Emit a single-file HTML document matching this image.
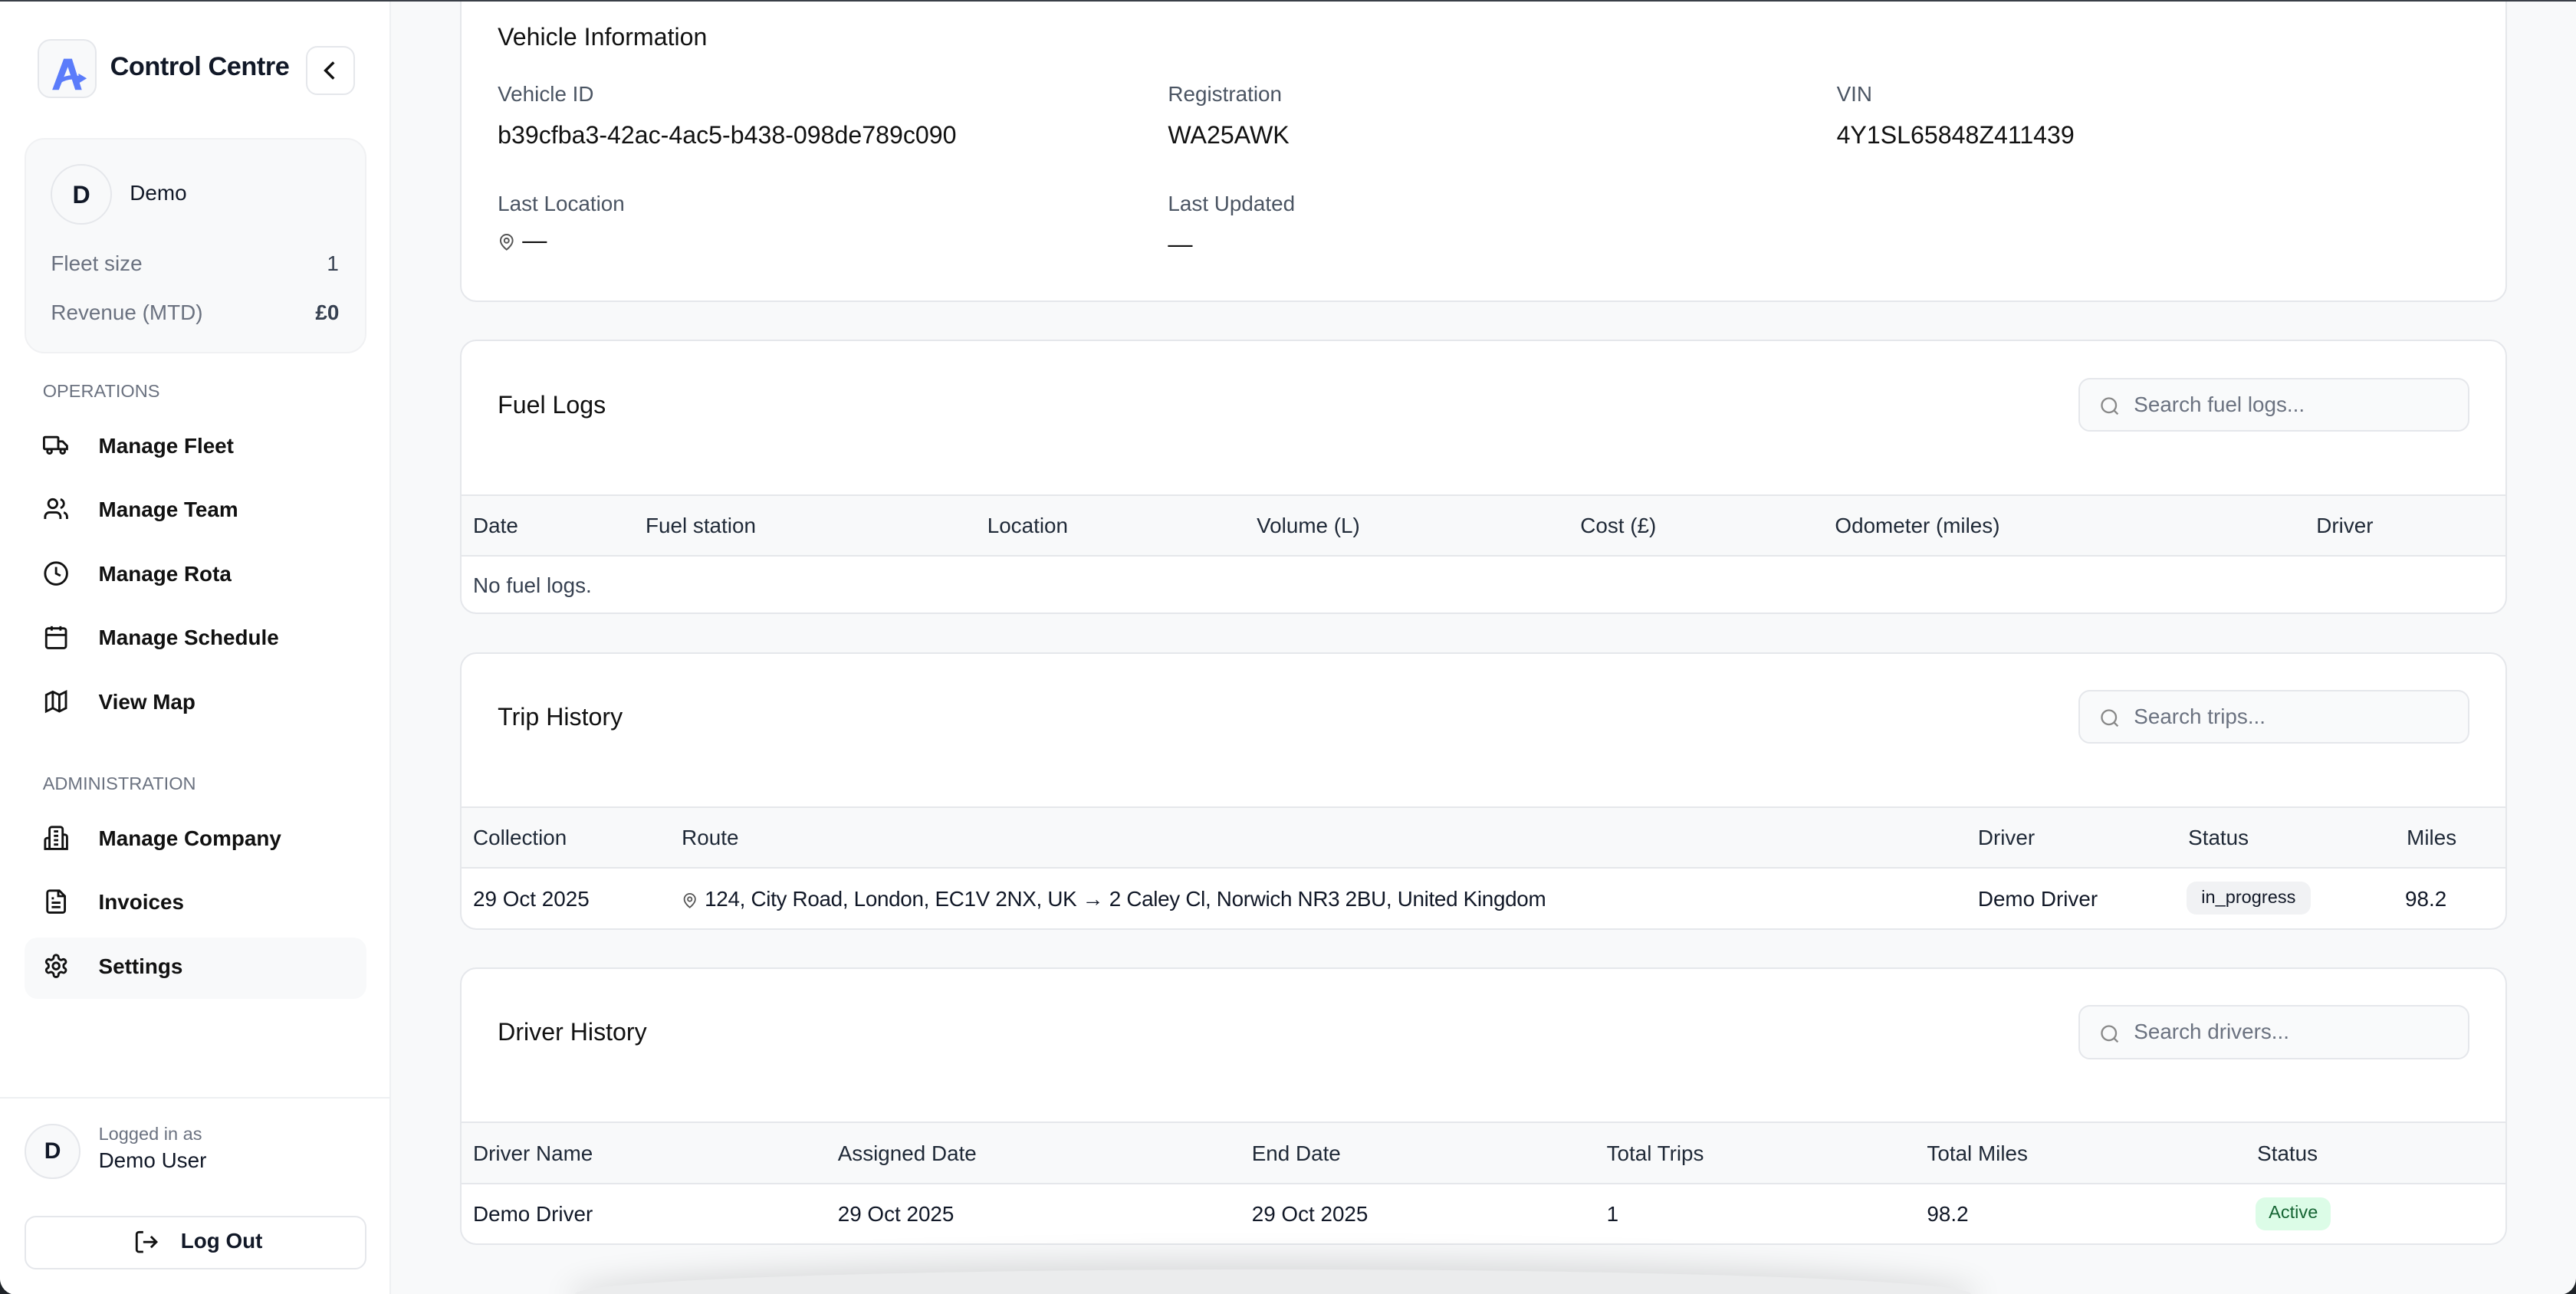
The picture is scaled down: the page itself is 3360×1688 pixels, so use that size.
<!DOCTYPE html>
<html><head><meta charset="utf-8"><style>
*{box-sizing:border-box;margin:0;padding:0}
html,body{width:3360px;height:1688px;overflow:hidden;background:#1f2328}
#w{zoom:2.142857;width:1568px;height:788px;position:relative;font-family:"Liberation Sans",sans-serif;color:#111827;background:#f8f9fa;border-radius:0 0 10px 10px;overflow:hidden;border-top:1px solid #3a3f47}
.a{position:absolute;white-space:nowrap}
#sb{position:absolute;left:0;top:0;width:238px;height:788px;background:#fff;border-right:1px solid #eef0f2}
.nav{position:absolute;left:26px;font-size:13px;font-weight:bold;color:#111;white-space:nowrap;width:190px}
.nav svg{position:absolute;left:0;top:-1px}
.nav span{position:absolute;left:34px;top:0;white-space:nowrap}
.card{position:absolute;left:281px;width:1246px;background:#fff;border:1px solid #e5e7eb;border-radius:10px;overflow:hidden}
.th{position:absolute;left:0;right:0;height:38px;background:#f8f9fa;border-top:1px solid #e5e7eb;border-bottom:1px solid #e5e7eb}
.th div,.tr div{position:absolute;top:11px;font-size:13px;white-space:nowrap}
.th div{color:#1f2937}
.tr{position:absolute;left:0;right:0;height:37px}
.h{position:absolute;left:22px;font-size:15px;color:#111}
.srch{position:absolute;left:984px;width:238px;height:33px;border:1px solid #e5e7eb;border-radius:7px;background:#f9fafb;font-size:13px;color:#6b7280}
.srch svg{position:absolute;left:12px;top:10px}
.srch span{position:absolute;left:33px;top:8px}
.lbl{font-size:13px;color:#4b5563}
.val{font-size:15px;color:#111}
</style></head><body><div id="w">
<div id="sb">
 <div class="a" style="left:23px;top:23px;width:36px;height:36px;border:1px solid #e5e7eb;border-radius:8px;background:#f8f9fa">
  <svg width="36" height="36" viewBox="0 0 36 36"><path d="M8 30 L15 11 L20 11 L26 30 L22 30 L17.5 16 L12 30Z" fill="#5b7cfa"/><path d="M12 25 Q18 21 25 23" stroke="#5b7cfa" stroke-width="2.5" fill="none"/><path d="M24 20 L29 23 L24 26Z" fill="#5b7cfa"/></svg>
 </div>
 <div class="a" style="left:67px;top:31px;font-size:16px;font-weight:bold;letter-spacing:-0.2px">Control Centre</div>
 <div class="a" style="left:186px;top:27px;width:30px;height:30px;border:1px solid #e5e7eb;border-radius:7px;background:#fff"><svg width="28" height="28" viewBox="0 0 28 28"><path d="M16 9 L11 14 L16 19" stroke="#111" stroke-width="1.6" fill="none"/></svg></div>
 <div class="a" style="left:15px;top:83px;width:208px;height:131px;background:#f8f9fa;border:1px solid #f0f1f3;border-radius:12px"></div>
 <div class="a" style="left:31px;top:99px;width:37px;height:37px;border:1px solid #e5e7eb;border-radius:50%;background:#f8f9fa;text-align:center;line-height:36px;font-weight:bold;font-size:15px">D</div>
 <div class="a" style="left:79px;top:109px;font-size:13px">Demo</div>
 <div class="a" style="left:31px;top:152px;font-size:13px;color:#6b7280">Fleet size</div>
 <div class="a" style="left:199px;top:152px;font-size:13px;color:#374151">1</div>
 <div class="a" style="left:31px;top:182px;font-size:13px;color:#6b7280">Revenue (MTD)</div>
 <div class="a" style="left:192px;top:182px;font-size:13px;color:#374151;font-weight:bold">£0</div>
 <div class="a" style="left:26px;top:231px;font-size:11px;color:#6b7280">OPERATIONS</div>
 <div class="nav" style="top:263px"><svg width="16" height="16" viewBox="0 0 24 24" fill="none" stroke="#111" stroke-width="2"><rect x="1" y="5" width="13" height="11" rx="1"/><path d="M14 9h4l4 4v3h-8"/><circle cx="6" cy="18" r="2"/><circle cx="18" cy="18" r="2"/></svg><span>Manage Fleet</span></div>
 <div class="nav" style="top:302px"><svg width="16" height="16" viewBox="0 0 24 24" fill="none" stroke="#111" stroke-width="2"><circle cx="9" cy="7" r="4"/><path d="M2 21v-2a4 4 0 0 1 4-4h6a4 4 0 0 1 4 4v2M16 3.1a4 4 0 0 1 0 7.8M22 21v-2a4 4 0 0 0-3-3.9"/></svg><span>Manage Team</span></div>
 <div class="nav" style="top:341px"><svg width="16" height="16" viewBox="0 0 24 24" fill="none" stroke="#111" stroke-width="2"><circle cx="12" cy="12" r="10"/><path d="M12 6v6l4 2"/></svg><span>Manage Rota</span></div>
 <div class="nav" style="top:380px"><svg width="16" height="16" viewBox="0 0 24 24" fill="none" stroke="#111" stroke-width="2"><rect x="3" y="4" width="18" height="18" rx="2"/><path d="M16 2v4M8 2v4M3 10h18"/></svg><span>Manage Schedule</span></div>
 <div class="nav" style="top:419px"><svg width="16" height="16" viewBox="0 0 24 24" fill="none" stroke="#111" stroke-width="2"><path d="M3 6l6-3 6 3 6-3v15l-6 3-6-3-6 3z M9 3v15 M15 6v15"/></svg><span>View Map</span></div>
 <div class="a" style="left:26px;top:470px;font-size:11px;color:#6b7280">ADMINISTRATION</div>
 <div class="nav" style="top:502px"><svg width="16" height="16" viewBox="0 0 24 24" fill="none" stroke="#111" stroke-width="2"><path d="M6 22V4a2 2 0 0 1 2-2h8a2 2 0 0 1 2 2v18zM6 12H4a2 2 0 0 0-2 2v8h4M18 9h2a2 2 0 0 1 2 2v11h-4M10 6h4M10 10h4M10 14h4M10 18h4"/></svg><span>Manage Company</span></div>
 <div class="nav" style="top:541px"><svg width="16" height="16" viewBox="0 0 24 24" fill="none" stroke="#111" stroke-width="2"><path d="M15 2H6a2 2 0 0 0-2 2v16a2 2 0 0 0 2 2h12a2 2 0 0 0 2-2V7z M14 2v5h5 M8 9h2 M8 13h8 M8 17h8"/></svg><span>Invoices</span></div>
 <div class="a" style="left:15px;top:570px;width:208px;height:37px;background:#f8f9fa;border-radius:8px"></div>
 <div class="nav" style="top:580px"><svg width="16" height="16" viewBox="0 0 24 24" fill="none" stroke="#111" stroke-width="2"><circle cx="12" cy="12" r="3"/><path d="M12.2 2h-.4a2 2 0 0 0-2 2v.2a2 2 0 0 1-1 1.7l-.4.3a2 2 0 0 1-2 0l-.2-.1a2 2 0 0 0-2.7.7l-.2.4a2 2 0 0 0 .7 2.7l.2.1a2 2 0 0 1 1 1.7v.5a2 2 0 0 1-1 1.8l-.2.1a2 2 0 0 0-.7 2.7l.2.4a2 2 0 0 0 2.7.7l.2-.1a2 2 0 0 1 2 0l.4.3a2 2 0 0 1 1 1.7v.2a2 2 0 0 0 2 2h.4a2 2 0 0 0 2-2v-.2a2 2 0 0 1 1-1.7l.4-.3a2 2 0 0 1 2 0l.2.1a2 2 0 0 0 2.7-.7l.2-.4a2 2 0 0 0-.7-2.7l-.2-.1a2 2 0 0 1-1-1.7v-.5a2 2 0 0 1 1-1.8l.2-.1a2 2 0 0 0 .7-2.7l-.2-.4a2 2 0 0 0-2.7-.7l-.2.1a2 2 0 0 1-2 0l-.4-.3a2 2 0 0 1-1-1.7V4a2 2 0 0 0-2-2z"/></svg><span>Settings</span></div>
 <div class="a" style="left:0;top:667px;width:238px;height:1px;background:#eef0f2"></div>
 <div class="a" style="left:15px;top:683px;width:34px;height:34px;border:1px solid #e5e7eb;border-radius:50%;background:#f8f9fa;text-align:center;line-height:32px;font-weight:bold;font-size:14px">D</div>
 <div class="a" style="left:60px;top:683px;font-size:11px;color:#6b7280">Logged in as</div>
 <div class="a" style="left:60px;top:698px;font-size:13px">Demo User</div>
 <div class="a" style="left:15px;top:739px;width:208px;height:33px;border:1px solid #e5e7eb;border-radius:7px;background:#fff"></div>
 <svg class="a" style="left:81px;top:747px" width="16" height="16" viewBox="0 0 24 24" fill="none" stroke="#111" stroke-width="2"><path d="M9 21H5a2 2 0 0 1-2-2V5a2 2 0 0 1 2-2h4M16 17l5-5-5-5M21 12H9"/></svg>
 <div class="a" style="left:110px;top:747px;font-size:13px;font-weight:bold">Log Out</div>
</div>

<div class="card" style="top:-11px;height:194px;left:280px">
 <div class="h" style="top:23px">Vehicle Information</div>
 <div class="a lbl" style="left:22px;top:59px">Vehicle ID</div>
 <div class="a val" style="left:22px;top:83px">b39cfba3-42ac-4ac5-b438-098de789c090</div>
 <div class="a lbl" style="left:430px;top:59px">Registration</div>
 <div class="a val" style="left:430px;top:83px">WA25AWK</div>
 <div class="a lbl" style="left:837px;top:59px">VIN</div>
 <div class="a val" style="left:837px;top:83px">4Y1SL65848Z411439</div>
 <div class="a lbl" style="left:22px;top:126px">Last Location</div>
 <svg class="a" style="left:22px;top:151px" width="11" height="11" viewBox="0 0 24 24" fill="none" stroke="#555" stroke-width="2"><path d="M20 10c0 6-8 12-8 12s-8-6-8-12a8 8 0 0 1 16 0z"/><circle cx="12" cy="10" r="3"/></svg>
 <div class="a val" style="left:37px;top:147px">—</div>
 <div class="a lbl" style="left:430px;top:126px">Last Updated</div>
 <div class="a val" style="left:430px;top:149px">—</div>
</div>

<div class="card" style="top:206px;height:167px;left:280px">
 <div class="h" style="top:30px">Fuel Logs</div>
 <div class="srch" style="top:22px"><svg width="13" height="13" viewBox="0 0 24 24" fill="none" stroke="#888" stroke-width="2"><circle cx="11" cy="11" r="8"/><path d="M21 21l-4.3-4.3"/></svg><span>Search fuel logs...</span></div>
 <div class="th" style="top:93px"><div style="left:7px">Date</div><div style="left:112px">Fuel station</div><div style="left:320px">Location</div><div style="left:484px">Volume (L)</div><div style="left:681px">Cost (£)</div><div style="left:836px">Odometer (miles)</div><div style="left:1129px">Driver</div></div>
 <div class="tr" style="top:131px"><div style="left:7px;top:10px;color:#374151">No fuel logs.</div></div>
</div>

<div class="card" style="top:396px;height:169px;left:280px">
 <div class="h" style="top:30px">Trip History</div>
 <div class="srch" style="top:22px"><svg width="13" height="13" viewBox="0 0 24 24" fill="none" stroke="#888" stroke-width="2"><circle cx="11" cy="11" r="8"/><path d="M21 21l-4.3-4.3"/></svg><span>Search trips...</span></div>
 <div class="th" style="top:93px"><div style="left:7px">Collection</div><div style="left:134px">Route</div><div style="left:923px">Driver</div><div style="left:1051px">Status</div><div style="left:1184px">Miles</div></div>
 <div class="tr" style="top:131px"><div style="left:7px">29 Oct 2025</div>
  <svg class="a" style="left:134px;top:14px" width="10" height="11" viewBox="0 0 24 24" fill="none" stroke="#555" stroke-width="2"><path d="M20 10c0 6-8 12-8 12s-8-6-8-12a8 8 0 0 1 16 0z"/><circle cx="12" cy="10" r="3"/></svg>
  <div style="left:148px;letter-spacing:-0.15px">124, City Road, London, EC1V 2NX, UK → 2 Caley Cl, Norwich NR3 2BU, United Kingdom</div>
  <div style="left:923px">Demo Driver</div>
  <div style="left:1050px;top:8px;height:20px;padding:3px 9px;background:#f1f2f4;border-radius:6px;font-size:11px">in_progress</div>
  <div style="left:1183px">98.2</div></div>
</div>

<div class="card" style="top:588px;height:169px;left:280px">
 <div class="h" style="top:30px">Driver History</div>
 <div class="srch" style="top:22px"><svg width="13" height="13" viewBox="0 0 24 24" fill="none" stroke="#888" stroke-width="2"><circle cx="11" cy="11" r="8"/><path d="M21 21l-4.3-4.3"/></svg><span>Search drivers...</span></div>
 <div class="th" style="top:93px"><div style="left:7px">Driver Name</div><div style="left:229px">Assigned Date</div><div style="left:481px">End Date</div><div style="left:697px">Total Trips</div><div style="left:892px">Total Miles</div><div style="left:1093px">Status</div></div>
 <div class="tr" style="top:131px"><div style="left:7px">Demo Driver</div><div style="left:229px">29 Oct 2025</div><div style="left:481px">29 Oct 2025</div><div style="left:697px">1</div><div style="left:892px">98.2</div>
  <div style="left:1092px;top:8px;height:20px;padding:3px 8px;background:#dcfce7;color:#166534;border-radius:6px;font-size:11px">Active</div></div>
</div>
<div class="a" style="left:350px;top:772px;width:850px;height:30px;border-radius:50%;box-shadow:0 0 18px 6px rgba(0,0,0,.12);background:rgba(0,0,0,.05)"></div>
</div></body></html>
